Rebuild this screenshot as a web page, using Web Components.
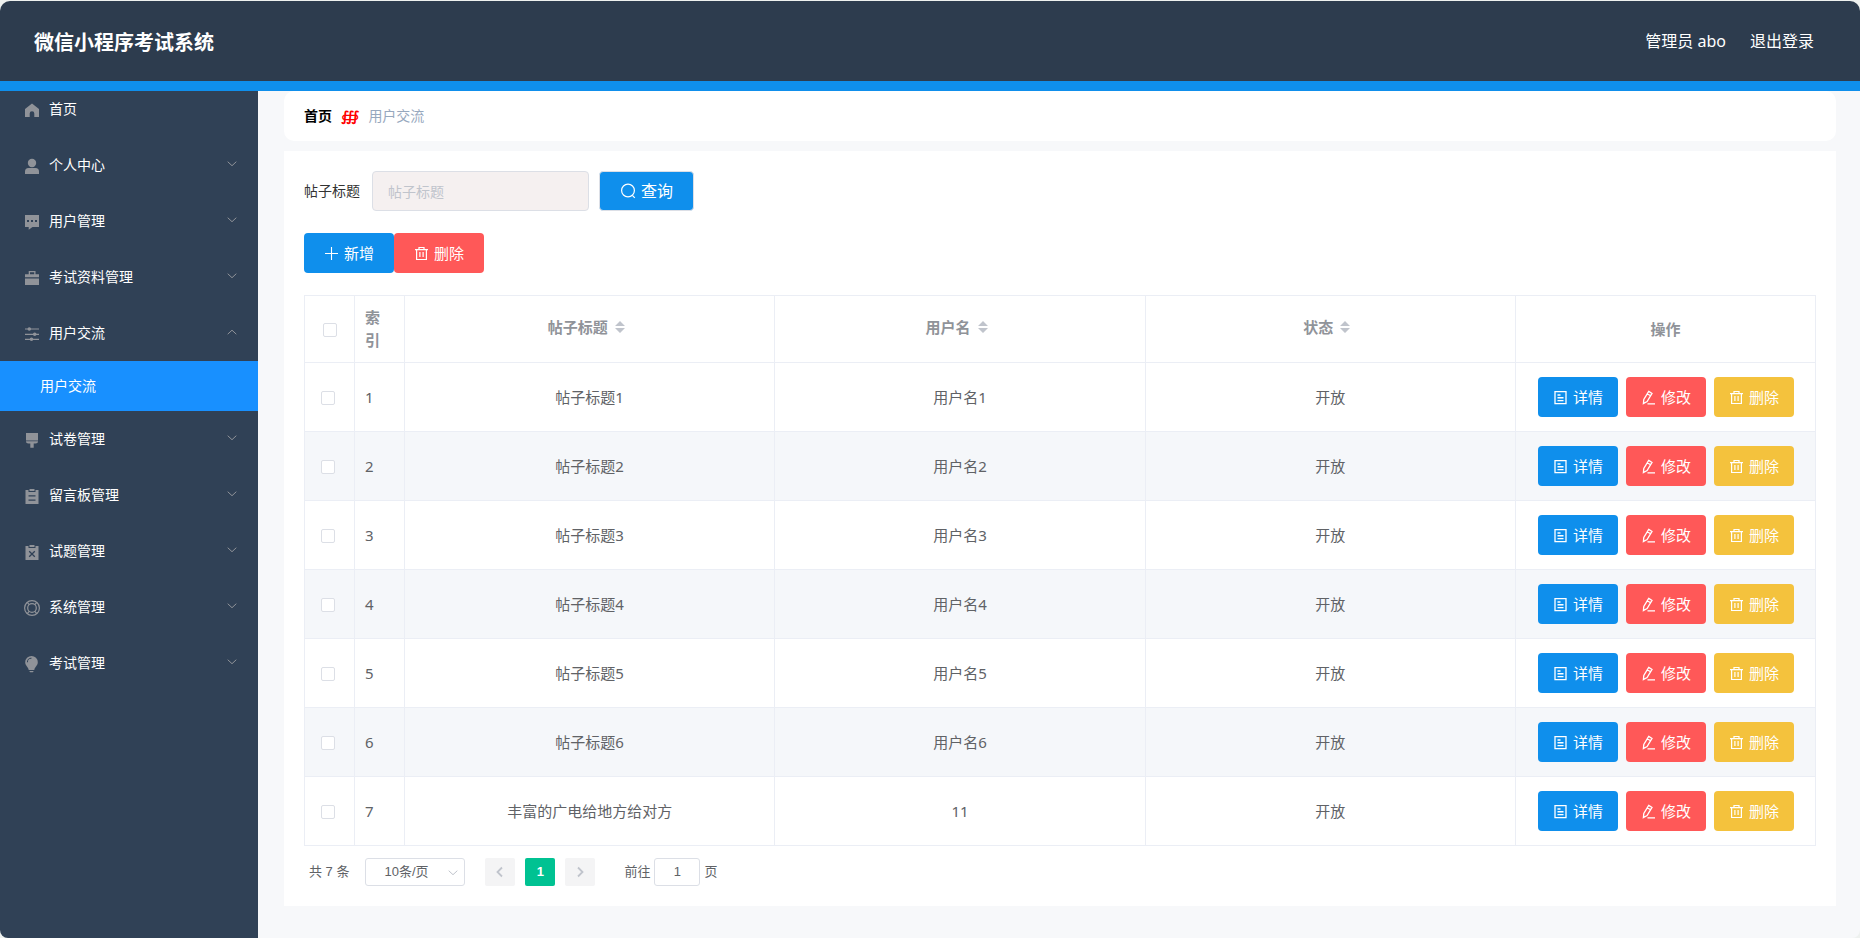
<!DOCTYPE html>
<html lang="zh-CN">
<head>
<meta charset="utf-8">
<title>微信小程序考试系统</title>
<style>
  html { background: #eef1ef; }
  body { margin: 0; font: 14px/20px "Noto Sans", "Noto Sans CJK SC", sans-serif; color: #333; }
</style>
</head>
<body>
<exam-app></exam-app>
<script>
const ICONS = {
  home: ['18 20', '<path fill="currentColor" d="M9 4.6 16 10v8h-4.700v-3.500a2.300 2.300 0 0 0-4.600 0V18H2v-8z"/>'],
  user: ['18 20', '<circle cx="9" cy="8" r="4.200" fill="currentColor"/><path fill="currentColor" d="M2 19v-2.500a3.500 3.500 0 0 1 3.500-3.500h7a3.500 3.500 0 0 1 3.500 3.500V19z"/>'],
  chat: ['18 20', '<path fill="currentColor" fill-rule="evenodd" d="M2 4h14v12H9.500L5.700 18.800V16H2zM4 9v2h2V9zM8 9v2h2V9zM12 9v2h2V9z"/>'],
  briefcase: ['18 20', '<path fill="currentColor" fill-rule="evenodd" d="M5.700 4h6.800v3.300H16v3H2v-3h3.700zM7 5.300v2h4.200v-2zM2 11.500h14V18H2z"/>'],
  sliders: ['18 20', '<path stroke="currentColor" stroke-width="1.200" d="M2 6h14M2 11.300h14M2 16.300h14"/><g fill="currentColor"><circle cx="6.300" cy="6" r="1.800"/><circle cx="11.700" cy="11.300" r="1.800"/><circle cx="8.500" cy="16.300" r="1.800"/></g>'],
  brush: ['18 20', '<path fill="currentColor" d="M3 4h12v7.400H3zM3 12.300h12c0 1.500-1 2.200-2.400 2.200h-1.900v4.200H7.300v-4.200H5.400C4 14.500 3 13.800 3 12.300z"/>'],
  clipboard: ['18 20', '<path fill="currentColor" fill-rule="evenodd" d="M6.500 4h5v2h-5zM2.500 5h3v2h7V5h3v14h-13zM5.500 10.200v1.200h7v-1.200zM5.500 14.500v1.200h7v-1.200z"/>'],
  clipboardX: ['18 20', '<path fill="currentColor" d="M6.500 4h5v2h-5zM2.500 5h3v2h7V5h3v14h-13z"/><path stroke="#304156" stroke-width="1.300" d="m6.200 10.200 5.600 5.600m0-5.600-5.600 5.600"/>'],
  lifebuoy: ['18 20', '<g fill="none" stroke="currentColor" stroke-width="1.200"><circle cx="9" cy="11" r="7.400"/><circle cx="9" cy="11" r="4.300"/><path d="M4.200 5.400 6.200 7.700M13.800 5.400l-2 2.300M4.200 16.600l2-2.300M13.800 16.600l-2-2.300"/></g>'],
  bulb: ['18 20', '<path fill="currentColor" d="M8.500 3a6.300 6.300 0 0 1 6.300 6.300c0 3.400-3 4.500-3.500 7.700H5.700C5.200 13.800 2.200 12.700 2.200 9.300A6.300 6.300 0 0 1 8.500 3zM6.200 17.900h4.600l-1 1.300H7.200z"/><path fill="none" stroke="#304156" d="M4.400 9.300a4.100 4.100 0 0 1 4.100-4.100"/>'],
  down: ['12 12', '<path fill="none" stroke="currentColor" d="m1.700 2.700 4.300 4 4.300-4"/>'],
  up: ['12 12', '<path fill="none" stroke="currentColor" d="m1.700 7.200 4.300-4 4.300 4"/>'],
  left: ['12 12', '<path fill="none" stroke="currentColor" stroke-width="1.800" d="M8 1.500 3.500 6 8 10.500"/>'],
  right: ['12 12', '<path fill="none" stroke="currentColor" stroke-width="1.800" d="M4 1.500 8.500 6 4 10.500"/>'],
  search: ['16 16', '<g fill="none" stroke="currentColor" stroke-width="1.200"><circle cx="8" cy="7.500" r="6.400"/><path d="m12.300 12.300 2.500 2.500"/></g>'],
  plus: ['15 15', '<path stroke="currentColor" stroke-width="1.100" d="M1 7.500h13M7.500 1v13"/>'],
  trash: ['15 15', '<path fill="none" stroke="currentColor" stroke-width="1.200" d="M1 3.600h13M5 3.400V1.500h5v1.900M2.600 3.600v9.900h9.800V3.600M5.900 6v5M9.100 6v5"/>'],
  doc: ['15 15', '<path fill="none" stroke="currentColor" stroke-width="1.300" d="M2 1.600h11v12H2z"/><path stroke="currentColor" stroke-width="1.400" d="M4.500 5h3M4.500 7.800h6M4.500 10.600h6"/>'],
  pen: ['15 15', '<path fill="none" stroke="currentColor" stroke-width="1.300" d="m7.700 1.400 3.300 2-4.900 8.200-3.700 2 .400-4.100zM6.200 3.800l3.400 2M6.500 13.800H14"/>'],
  sort: ['12 14', '<path fill="#c0c4cc" d="m6 1 5 5H1zM6 13 1 8h10z"/>']
};

class BaseElement extends HTMLElement {
  constructor() {
    super();
    this.attachShadow({ mode: 'open' });
  }
  connectedCallback() {
    this.shadowRoot.innerHTML = this.render();
  }
}

customElements.define('exam-icon', class extends BaseElement {
  render() {
    const [size, body] = ICONS[this.getAttribute('name')];
    const [w, h] = size.split(' ');
    return `<style>
      :host { display: inline-flex; flex: none; width: ${w}px; height: ${h}px; }
      svg { display: block; width: 100%; height: 100%; }
    </style><svg viewBox="0 0 ${size}" aria-hidden="true">${body}</svg>`;
  }
});

customElements.define('exam-button', class extends BaseElement {
  render() {
    return `<style>
      :host { display: inline-block; }
      button {
        display: flex; align-items: center; justify-content: center; gap: 5px;
        box-sizing: border-box; height: 40px; margin: 0; padding: 0 20px; border: 0; border-radius: 4px;
        font: inherit; font-size: 15px; line-height: 20px; color: #fff; background: #0f8fec; cursor: pointer;
        white-space: nowrap;
      }
      :host([tone="danger"]) button { background: #ff5858; }
      :host([tone="warning"]) button { background: #f4c23d; }
      :host([compact]) button { padding: 0 15px; }
      :host([outlined]) button { border: 1px solid #dcdfe6; font-size: 16px; }
    </style>
    <button type="button"><exam-icon name="${this.getAttribute('icon')}"></exam-icon><slot></slot></button>`;
  }
});

customElements.define('exam-header', class extends BaseElement {
  render() {
    return `<style>
      :host {
        display: flex; align-items: center; justify-content: space-between; position: relative; z-index: 1;
        height: 80px; padding: 0 46px 0 34px; background: #2d3c4e; color: #fff;
        border-bottom: 10px solid #0f8fec; border-radius: 10px 10px 0 0;
      }
      h1 { margin: 0; padding-top: 4px; font-size: 20px; line-height: 28px; font-weight: 700; }
      nav { display: flex; gap: 24px; font-size: 16px; line-height: 24px; }
      a { color: inherit; text-decoration: none; }
    </style>
    <h1>微信小程序考试系统</h1>
    <nav><span>管理员 abo</span><a href="#logout">退出登录</a></nav>`;
  }
});

customElements.define('exam-menu-item', class extends BaseElement {
  render() {
    const icon = this.getAttribute('icon');
    const arrow = this.getAttribute('arrow');
    return `<style>
      :host { display: block; }
      a {
        display: flex; align-items: center; gap: 8px; height: 56px; padding: 0 20px 0 23px;
        color: #fff; text-decoration: none;
      }
      span { flex: 1; }
      exam-icon { color: #909399; }
      :host([active]) a { height: 50px; padding-left: 40px; background: #1890ff; }
    </style>
    <a href="#">${icon ? `<exam-icon name="${icon}"></exam-icon>` : ''}<span><slot></slot></span>${arrow ? `<exam-icon name="${arrow}"></exam-icon>` : ''}</a>`;
  }
});

customElements.define('exam-sidebar', class extends BaseElement {
  render() {
    return `<style>
      :host { display: block; flex: none; width: 258px; background: #304156; border-radius: 0 0 0 8px; }
    </style>
    <nav>
      <exam-menu-item icon="home">首页</exam-menu-item>
      <exam-menu-item icon="user" arrow="down">个人中心</exam-menu-item>
      <exam-menu-item icon="chat" arrow="down">用户管理</exam-menu-item>
      <exam-menu-item icon="briefcase" arrow="down">考试资料管理</exam-menu-item>
      <exam-menu-item icon="sliders" arrow="up">用户交流</exam-menu-item>
      <exam-menu-item active>用户交流</exam-menu-item>
      <exam-menu-item icon="brush" arrow="down">试卷管理</exam-menu-item>
      <exam-menu-item icon="clipboard" arrow="down">留言板管理</exam-menu-item>
      <exam-menu-item icon="clipboardX" arrow="down">试题管理</exam-menu-item>
      <exam-menu-item icon="lifebuoy" arrow="down">系统管理</exam-menu-item>
      <exam-menu-item icon="bulb" arrow="down">考试管理</exam-menu-item>
    </nav>`;
  }
});

customElements.define('exam-breadcrumb', class extends BaseElement {
  render() {
    return `<style>
      :host { display: flex; align-items: center; gap: 9px; height: 50px; padding: 0 20px; background: #fff; border-radius: 10px; }
      a { color: #000; font-weight: 700; text-decoration: none; }
      i { color: #f00; font: 700 14px/20px "DejaVu Sans", sans-serif; }
      span { color: #97a8be; }
    </style>
    <a href="#">首页</a><i>∰</i><span>用户交流</span>`;
  }
});

customElements.define('exam-search', class extends BaseElement {
  render() {
    return `<style>
      :host { display: block; }
      form { display: flex; align-items: center; gap: 10px; }
      label { margin-right: 2px; color: #333; }
      input {
        box-sizing: border-box; width: 217px; height: 40px; padding: 0 15px; margin: 0;
        border: 1px solid #dcdfe6; border-radius: 4px; background: #f5f0f0; font: inherit; color: #333;
      }
      input::placeholder { color: #c0c4cc; opacity: 1; }
    </style>
    <form>
      <label for="title">帖子标题</label>
      <input id="title" type="text" placeholder="帖子标题">
      <exam-button icon="search" outlined>查询</exam-button>
    </form>`;
  }
});

customElements.define('exam-table', class extends BaseElement {
  render() {
    const rows = [1, 2, 3, 4, 5, 6].map(n => [`帖子标题${n}`, `用户名${n}`]);
    rows.push(['丰富的广电给地方给对方', '11']);
    const body = rows.map(([title, name], i) => `<tr>
      <td><input type="checkbox" aria-label="选择第${i + 1}行"></td>
      <td class="index">${i + 1}</td><td>${title}</td><td>${name}</td><td>开放</td>
      <td><div class="actions">
        <exam-button icon="doc" compact>详情</exam-button>
        <exam-button icon="pen" tone="danger" compact>修改</exam-button>
        <exam-button icon="trash" tone="warning" compact>删除</exam-button>
      </div></td></tr>`).join('');
    const sortable = label => `<th scope="col"><div class="sort">${label}<exam-icon name="sort"></exam-icon></div></th>`;
    return `<style>
      :host { display: block; }
      table { width: 100%; table-layout: fixed; border-collapse: collapse; font-size: 15px; line-height: 23px; color: #606266; }
      th, td { box-sizing: border-box; padding: 0; border: 1px solid #ebeef5; text-align: center; }
      th { height: 67px; color: #909399; font-weight: 700; }
      td { height: 69px; }
      tbody tr:nth-child(even) { background: #f5f7fa; }
      .select, .number { width: 50px; }
      .operate { width: 300px; }
      .index { padding: 0 10px; text-align: left; }
      th.index { padding-right: 24px; }
      .sort { display: flex; align-items: center; justify-content: center; gap: 6px; padding: 0 6px 4px 0; }
      .actions { display: flex; justify-content: center; gap: 8px; padding-left: 1px; }
      input {
        appearance: none; display: block; box-sizing: border-box; width: 14px; height: 14px; margin: 2px 0 0 16px;
        border: 1px solid #dcdfe6; border-radius: 2px; background: #fff;
      }
      th input { margin-left: 18px; }
      input:checked { background: #0f8fec; }
    </style>
    <table>
      <colgroup><col class="select"><col class="number"><col><col><col><col class="operate"></colgroup>
      <thead><tr>
        <th scope="col"><input type="checkbox" aria-label="全选"></th>
        <th scope="col" class="index">索引</th>
        ${sortable('帖子标题')}${sortable('用户名')}${sortable('状态')}
        <th scope="col">操作</th>
      </tr></thead>
      <tbody>${body}</tbody>
    </table>`;
  }
});

customElements.define('exam-pagination', class extends BaseElement {
  render() {
    return `<style>
      :host {
        display: flex; align-items: center; padding: 0 5px; color: #606266;
        font: 13px/28px "Liberation Sans", "Noto Sans CJK SC", sans-serif;
      }
      .size { position: relative; margin: 0 20px 0 16px; }
      .size exam-icon { position: absolute; right: 6px; top: 10px; color: #c0c4cc; pointer-events: none; }
      select, input, button { box-sizing: border-box; height: 28px; margin: 0; font: inherit; color: inherit; border-radius: 3px; }
      select, input { border: 1px solid #dcdfe6; background: #fff; }
      select { appearance: none; display: block; width: 100px; padding: 0 18px; line-height: 20px; }
      .pages { display: flex; gap: 10px; }
      button {
        display: flex; align-items: center; justify-content: center; width: 30px; padding: 0; border: 0;
        border-radius: 2px; background: #f4f4f5; color: #c0c4cc;
      }
      button.current { background: #00c292; color: #fff; font-weight: 700; }
      label { margin-left: 29px; }
      input { width: 46px; margin: 0 4px; padding: 0; text-align: center; }
    </style>
    <span>共 7 条</span>
    <div class="size"><select aria-label="每页条数"><option>10条/页</option><option>20条/页</option></select><exam-icon name="down"></exam-icon></div>
    <div class="pages">
      <button type="button" aria-label="上一页" disabled><exam-icon name="left"></exam-icon></button>
      <button type="button" class="current">1</button>
      <button type="button" aria-label="下一页" disabled><exam-icon name="right"></exam-icon></button>
    </div>
    <label for="page">前往</label><input id="page" type="text" value="1"><span>页</span>`;
  }
});

customElements.define('exam-card', class extends BaseElement {
  render() {
    return `<style>
      :host { display: block; margin-top: 10px; padding: 20px; background: #fff; }
    </style><slot></slot>`;
  }
});

customElements.define('exam-app', class extends BaseElement {
  render() {
    return `<style>
      :host { display: flex; flex-direction: column; box-sizing: border-box; min-height: 100vh; padding-top: 1px; }
      .body { display: flex; flex: 1; margin-top: -10px; }
      main { flex: 1; min-width: 0; padding: 10px 24px 20px 26px; background: #f7f8fa; border-radius: 0 0 8px 0; }
      .tools { display: flex; margin: 22px 0; }
      exam-pagination { margin: 12px 0 0; }
    </style>
    <exam-header></exam-header>
    <div class="body">
      <exam-sidebar></exam-sidebar>
      <main>
        <exam-breadcrumb></exam-breadcrumb>
        <exam-card>
          <exam-search></exam-search>
          <div class="tools">
            <exam-button icon="plus">新增</exam-button>
            <exam-button icon="trash" tone="danger">删除</exam-button>
          </div>
          <exam-table></exam-table>
          <exam-pagination></exam-pagination>
        </exam-card>
      </main>
    </div>`;
  }
});
</script>
</body>
</html>
